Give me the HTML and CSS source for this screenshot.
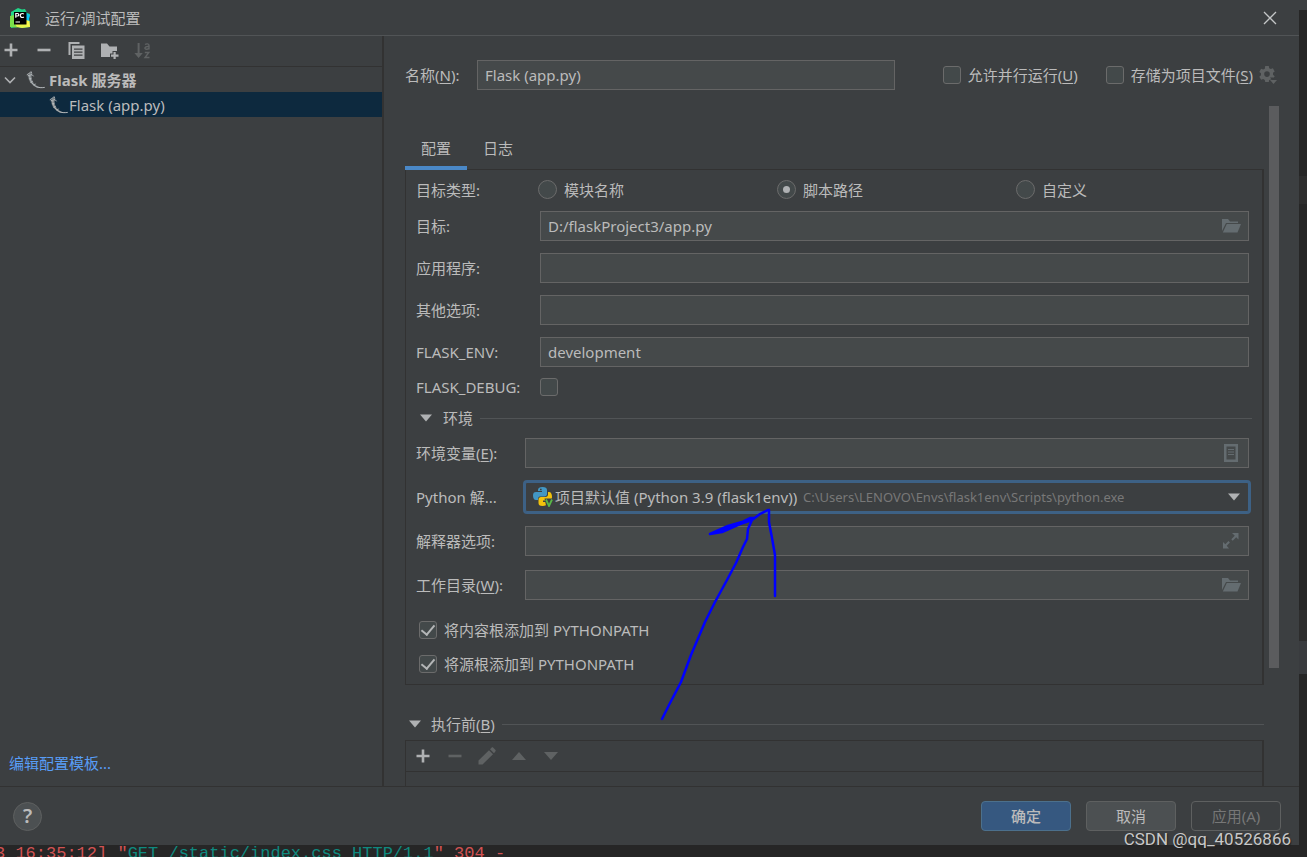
FILE: index.html
```html
<!DOCTYPE html>
<html lang="zh-CN">
<head>
<meta charset="utf-8">
<title>运行/调试配置</title>
<link rel="stylesheet" href="styles.css">
</head>
<body>
<svg class="defs" width="0" height="0" aria-hidden="true">
  <symbol id="plus" viewBox="0 0 16 16"><path d="M6.700 1.500h2.600v5.200h5.200v2.600H9.300v5.200H6.700V9.300H1.500V6.700h5.200z"/></symbol>
  <symbol id="minus" viewBox="0 0 16 16"><path d="M1.500 6.700h13v2.600h-13z"/></symbol>
  <symbol id="folder-open" viewBox="0 0 20 16"><path d="M1 1h6l2 2.500h8V5H5L1 13z"/><path d="M5.800 6H20l-3.500 8.500H1.800z"/></symbol>
  <symbol id="tri-down" viewBox="0 0 12 8"><path d="M0 .5h12L6 7.500z"/></symbol>
  <symbol id="flask" viewBox="0 0 20 18">
    <path d="M1.500 4.500L4.500 1.500l1.700 1L5.500 6c.3 4.500 3.500 8.500 8 10l5 .3c-3 1.200-8 .9-11-1.600C4 12 2.300 8.500 2.300 5.800z" fill="#777d80"/>
    <path d="M.8 3.800L4 1.800l1-1.200.8 1.700M1.800 4.800l4.200-1.200M6 3.500l1.500 1.800M3.800 5c0 4 2 8 6 10.300M3 8l2.500-.8M4.500 11.500l2.200-1.200M8 14.500l1.500-1.800M10 15.600c3 1.300 5.500 1.200 8.800.8" fill="none" stroke="#b9bdbf" stroke-width=".9"/>
  </symbol>
</svg>

<div class="dialog">
  <header class="titlebar">
    <svg class="logo" viewBox="0 0 20 20" aria-hidden="true">
      <path d="M1 4l7-4 4 1.500L15 1l2 4 3 1-1 4 1 9-9 1-4-1-6 1z" fill="#21d789"/>
      <path d="M0 8l4-1 4 12-1 .5L0 19z" fill="#7be04a"/>
      <path d="M5 16h14l1 3-8 1-5-1z" fill="#e6f24a"/>
      <path d="M16 5l4 2-1 4 .5 6H16z" fill="#07c3f2"/>
      <path d="M16 12l3.500 1 .5 6-4-2z" fill="#fcf84a"/>
      <rect x="4" y="4" width="12.500" height="12.500" fill="#000"/>
      <path d="M5.800 9.700V5.500h1.700a1.200 1.200 0 010 2.500H5.800M13.800 6.200a2 2 0 100 2.600M5.500 14h4.500" fill="none" stroke="#fff" stroke-width="1.200"/>
    </svg>
    <h1>运行/调试配置</h1>
    <button class="icon-btn close" aria-label="关闭"><svg viewBox="0 0 14 14" width="14" height="14"><path d="M1 1l12 12M13 1L1 13" fill="none" stroke="#c4c6c7" stroke-width="1.300"/></svg></button>
  </header>

  <div class="body">
    <aside class="side">
      <div class="toolbar">
        <button class="icon-btn" aria-label="添加"><svg width="16" height="16"><use href="#plus"/></svg></button>
        <button class="icon-btn" aria-label="移除"><svg width="16" height="16"><use href="#minus"/></svg></button>
        <button class="icon-btn" aria-label="复制"><svg width="17" height="17" viewBox="0 0 17 17"><path d="M.5 0h11v2H2.500v11h-2z"/><path fill-rule="evenodd" d="M4 3.500h12.500V17H4zM6 6.500v1.200h8.500V6.500zM6 9.500v1.200h8.500V9.500zM6 12.500v1.200h8.500v-1.200z"/></svg></button>
        <button class="icon-btn" aria-label="新建文件夹"><svg width="19" height="17" viewBox="0 0 19 17"><path d="M1 1.500h6l2.500 3H17V9h-4.500v2.500H10V15H1z"/><path d="M13.500 10h2.200v2.500h2.800v2.200h-2.800V17h-2.200v-2.300H11v-2.200h2.500z"/></svg></button>
        <button class="icon-btn dim" disabled aria-label="排序"><svg width="17" height="17" viewBox="0 0 17 17"><path d="M3.600 1h2v10h3.200l-4.200 5-4.200-5h3.200z"/><path d="M11 2.500c1.500-1 4-.9 4 1V7.500M15 4.500c-5-.5-5 3-2.300 2.700 1.300 0 2.300-.7 2.300-1.500M10.800 10.500h4L11 15.500h4.500" fill="none" stroke="#5f6263" stroke-width="1.400"/></svg></button>
      </div>
      <ul class="tree">
        <li class="group"><svg class="chev" viewBox="0 0 12 12" width="12" height="12"><path d="M1 3.500l5 5 5-5" fill="none" stroke="#afb1b3" stroke-width="1.600"/></svg><svg width="20" height="18"><use href="#flask"/></svg><span>Flask 服务器</span></li>
        <li class="leaf"><svg width="20" height="18"><use href="#flask"/></svg><span>Flask (app.py)</span></li>
      </ul>
      <a class="template-link" href="#">编辑配置模板...</a>
    </aside>

    <main class="main">
      <div class="name-row">
        <label class="name-label" for="name">名称(<u>N</u>):</label>
        <input class="field name-field" id="name" type="text" value="Flask (app.py)">
        <div class="name-options">
          <label class="check"><input type="checkbox"><span>允许并行运行(<u>U</u>)</span></label>
          <label class="check"><input type="checkbox"><span>存储为项目文件(<u>S</u>)</span></label>
          <button class="icon-btn gear dim" disabled aria-label="存储选项"><svg width="18" height="18" viewBox="0 0 18 18"><path fill-rule="evenodd" d="M6.200 0h3.600l.4 2.200 1.600.9 2.100-.8 1.800 3.100-1.700 1.400v2l1.700 1.400-.8 1.300H11l1.500 2-.7-.1-1.600.6L9.800 16H6.200l-.4-2-1.600-1-2.100.8L.3 10.700 2 9.300v-2L.3 5.900l1.800-3.100 2.100.8 1.600-.9zM8 5.300a2.800 2.800 0 100 5.600 2.800 2.800 0 000-5.600z"/><path d="M11 14h7l-3.500 4z"/></svg></button>
        </div>
      </div>

      <div class="scroll">
        <div class="content">
          <div class="tabs" role="tablist">
            <button class="tab active" role="tab" aria-selected="true">配置</button>
            <button class="tab" role="tab" aria-selected="false">日志</button>
          </div>
          <section class="panel">
            <div class="row type-row">
              <span>目标类型:</span>
              <div class="radios">
                <label class="check"><input type="radio" name="type"><span>模块名称</span></label>
                <label class="check"><input type="radio" name="type" checked><span>脚本路径</span></label>
                <label class="check"><input type="radio" name="type"><span>自定义</span></label>
              </div>
            </div>
            <div class="rows">
              <div class="row"><label for="target">目标:</label><div class="field"><input id="target" type="text" value="D:/flaskProject3/app.py"><button class="icon-btn steel" aria-label="浏览"><svg width="20" height="16"><use href="#folder-open"/></svg></button></div></div>
              <div class="row"><label for="app">应用程序:</label><input class="field" id="app" type="text"></div>
              <div class="row"><label for="opts">其他选项:</label><input class="field" id="opts" type="text"></div>
              <div class="row"><label for="fenv">FLASK_ENV:</label><input class="field" id="fenv" type="text" value="development"></div>
            </div>
            <div class="row debug-row"><label for="debug">FLASK_DEBUG:</label><div class="check"><input id="debug" type="checkbox"></div></div>
            <h2 class="section env-section"><svg width="12" height="8"><use href="#tri-down"/></svg><span>环境</span></h2>
            <div class="rows env-rows">
              <div class="row"><label for="vars">环境变量(<u>E</u>):</label><div class="field"><input id="vars" type="text"><button class="icon-btn steel" aria-label="编辑变量"><svg width="20" height="18" viewBox="0 0 20 18"><path fill-rule="evenodd" d="M3 0h14v18H3zM5.500 2.500v13h9v-13z"/><path d="M7 5h6v1H7zM7 7.500h6v1H7zM7 10h6v1H7z"/></svg></button></div></div>
              <div class="row"><label for="interp">Python 解...</label><div class="field combo">
                <svg width="20" height="20" viewBox="0 0 20 20" aria-hidden="true"><path d="M5 5V3c0-2 1.500-3 4.500-3S14 1 14 3v4c0 1.500-1 2.500-2.500 2.500H7C5.500 9.500 5 11 5 13H3c-2 0-3-2-3-4.500S1 5 3 5h6V4H5z" fill="#4297c4"/><path d="M15 5h1c2 0 3 2 3 5 0 2-1 3.500-3 3.500h-6V15h4v1.500c0 1.500-1.500 2.500-4.500 2.500S5.500 18 5.500 16v-3.500c0-1.500 1-2.500 2.500-2.500h4.500C14 10 15 9 15 7.500z" fill="#f2c20c"/><path d="M7 1.700h1.600v1.500H7z" fill="#3c3f41"/><path d="M11.500 11.500h9v9h-7z" fill="#3c3f41"/><path d="M13 12.500l3 6.500 3-6.500" fill="none" stroke="#59b848" stroke-width="1.800"/></svg>
                <select id="interp"><option>项目默认值 (Python 3.9 (flask1env))</option></select>
                <span class="path">C:\Users\LENOVO\Envs\flask1env\Scripts\python.exe</span>
                <svg class="caret" width="12" height="8"><use href="#tri-down"/></svg>
              </div></div>
              <div class="row"><label for="iopts">解释器选项:</label><div class="field"><input id="iopts" type="text"><button class="icon-btn steel" aria-label="展开"><svg width="20" height="16" viewBox="0 0 20 16"><path d="M11 0h6.500v6.500l-2.300-2.300-3.500 3.500-1.400-1.400 3.500-3.500zM2 9l2.300 2.300L7.500 8l1.400 1.400-3.200 3.300L8 15.500H2z"/></svg></button></div></div>
              <div class="row"><label for="wd">工作目录(<u>W</u>):</label><div class="field"><input id="wd" type="text"><button class="icon-btn steel" aria-label="浏览目录"><svg width="20" height="16"><use href="#folder-open"/></svg></button></div></div>
            </div>
            <div class="path-checks">
              <label class="check"><input type="checkbox" checked><span>将内容根添加到 PYTHONPATH</span></label>
              <label class="check"><input type="checkbox" checked><span>将源根添加到 PYTHONPATH</span></label>
            </div>
          </section>
          <h2 class="section before-section"><svg width="12" height="8"><use href="#tri-down"/></svg><span>执行前(<u>B</u>)</span></h2>
          <section class="tasks">
            <div class="toolbar">
              <button class="icon-btn" aria-label="添加任务"><svg width="16" height="16"><use href="#plus"/></svg></button>
              <button class="icon-btn dim" disabled aria-label="移除任务"><svg width="16" height="16"><use href="#minus"/></svg></button>
              <button class="icon-btn dim" disabled aria-label="编辑任务"><svg width="18" height="18" viewBox="0 0 18 18"><path d="M.5 17.500v-4L11 3.200l4 4L4.500 17.500zM12 2.200L13.500.7c.6-.6 1.200-.6 1.800 0l2 2c.6.6.6 1.200 0 1.800L16 6.200z"/></svg></button>
              <button class="icon-btn dim" disabled aria-label="上移"><svg width="14" height="8" viewBox="0 0 14 8"><path d="M7 0l7 8H0z"/></svg></button>
              <button class="icon-btn dim" disabled aria-label="下移"><svg width="14" height="8" viewBox="0 0 14 8"><path d="M7 8L0 0h14z"/></svg></button>
            </div>
          </section>
        </div>
        <div class="thumb"></div>
      </div>
    </main>
  </div>

  <footer class="footer">
    <button class="help" aria-label="帮助">?</button>
    <button class="btn primary">确定</button>
    <button class="btn">取消</button>
    <button class="btn" disabled>应用(A)</button>
  </footer>
</div>

<div class="editor-edge"><i class="mark top"></i><i class="mark mid"></i><i class="mark line"></i><i class="mark low"></i></div>
<div class="console"><span>3 16:35:12] "</span><span class="req">GET /static/index.css HTTP/1.1</span><span>" 304 -</span></div>

<svg class="scribble" width="160" height="230" viewBox="640 500 160 230" aria-hidden="true">
  <path d="M662 719l7-14 12-23 10-27 14-33 10-20 12-22 9-17 7-16 4-8 1-10 4-9-12 4-18 8-12 2 18-8 14-4 8-4h4l-12 5-20 7-12 4M752 520l8-6 8-4h1v12l3 16 3 17v41"/>
</svg>
<div class="watermark">CSDN @qq_40526866</div>
</body>
</html>
```
FILE: styles.css
```css
* { box-sizing: border-box; }

body {
  margin: 0;
  height: 100vh;
  display: grid;
  grid-template-columns: 1fr 8px;
  grid-template-rows: 1fr 12px;
  overflow: hidden;
  background: #262626;
  color: #bbbbbb;
  font: 15px/20px "Noto Sans", "Noto Sans CJK SC", sans-serif;
}

button, input, select { font: inherit; color: inherit; margin: 0; padding: 0; }
svg { fill: #afb1b3; display: block; flex: none; }
.defs { position: absolute; }
h1, h2 { margin: 0; font: inherit; }
u { text-underline-offset: 2px; }

.dialog { display: flex; flex-direction: column; min-width: 0; min-height: 0; background: #3c3f41; }

.titlebar {
  display: flex;
  align-items: center;
  gap: 15px;
  height: 36px;
  padding: 0 22px 0 10px;
  border-bottom: 1px solid #515456;
}
.logo { width: 20px; height: 20px; }
.close { margin-left: auto; }

.icon-btn { display: flex; align-items: center; justify-content: center; border: 0; background: none; }
.dim svg { fill: #5f6263; }
.steel svg { fill: #646c70; }

.body { display: flex; flex: 1; min-height: 0; }

.side { display: flex; flex-direction: column; width: 384px; border-right: 2px solid #323232; }
.toolbar { display: flex; align-items: center; }
.toolbar .icon-btn { width: 33px; height: 28px; }
.side .toolbar { height: 31px; padding-bottom: 2px; margin-left: -6px; border-bottom: 1px solid #323232; }
.tree { list-style: none; margin: 0; padding: 0; flex: 1; }
.tree li { display: flex; align-items: center; height: 25px; }
.group { padding-left: 4px; font-weight: 700; }
.chev { margin-right: 10px; }
.group span { margin-left: 3px; }
.tree .leaf { padding-left: 49px; background: #0d293e; }
.template-link { padding: 0 9px 13px; color: #589df6; text-decoration: none; }

.main { display: flex; flex-direction: column; flex: 1; min-width: 0; padding-left: 21px; overflow: hidden; }
.name-row { display: flex; align-items: center; flex: none; height: 70px; padding: 8px 22px 0 0; }
.name-label { width: 72px; }
.name-field { flex: 0 1 418px; }
.name-options { display: flex; align-items: center; margin-left: auto; }
.name-options .check + .check { margin-left: 28px; }
.gear { margin-left: 6px; }

.field {
  display: flex;
  align-items: center;
  min-width: 0;
  width: 100%;
  height: 30px;
  padding: 0 7px;
  border: 1px solid #646464;
  background: #45494a;
  outline: 0;
}
.field > input { flex: 1; min-width: 0; border: 0; background: none; outline: 0; }

.check { display: flex; align-items: center; gap: 7px; }
.check input {
  appearance: none;
  display: grid;
  place-items: center;
  flex: none;
  width: 18px;
  height: 18px;
  border: 1px solid #6b6b6b;
  border-radius: 3px;
  background: #43494a;
}
.check input[type="radio"] { width: 19px; height: 19px; border-radius: 50%; }
.check input[type="radio"]:checked::after { content: ""; width: 7px; height: 7px; border-radius: 50%; background: #afb1b3; }
.check input[type="checkbox"]:checked::after {
  content: "";
  width: 6px;
  height: 11px;
  margin-bottom: 3px;
  border: solid #b4b6b7;
  border-width: 0 2px 2px 0;
  transform: rotate(40deg);
}

.scroll { display: flex; align-items: flex-start; gap: 5px; flex: 1; min-height: 0; padding-right: 20px; }
.content { flex: 1; min-width: 0; }
.thumb { width: 10px; height: 562px; background: #5b5c5e; }

.tabs { position: relative; display: flex; height: 64px; padding-top: 20px; }
.tab { padding: 3px 16px 0; border: 0; border-bottom: 4px solid transparent; background: none; }
.tab.active { border-color: #4a88c7; }

.panel { margin-top: -1px; padding: 0 13px 3px 10px; border: 1px solid #323232; border-right-width: 2px; }

.row { display: grid; grid-template-columns: 124px 1fr; align-items: center; }
.type-row { height: 41px; padding-bottom: 2px; }
.radios { display: grid; grid-template-columns: 239px 239px 1fr; margin-left: -2px; }
.rows { display: grid; gap: 12px; }
.debug-row { height: 40px; }

.section { display: flex; align-items: center; height: 22px; }
.section::after { content: ""; flex: 1; height: 1px; margin-left: 7px; background: #515456; }
.section span { margin-left: 11px; }
.env-section { margin-right: -3px; padding-left: 4px; }

.env-rows { gap: 14px; margin-top: 9px; }
.env-rows .row { grid-template-columns: 109px 1fr; }
.combo { border-color: #3d6185; box-shadow: 0 0 0 2px #3d6185; border-radius: 2px; background: #3c3f41; padding-right: 8px; }
.combo select { appearance: none; border: 0; background: none; outline: 0; margin-left: 2px; }
.path { margin-left: 5px; color: #787878; font-size: 13px; white-space: nowrap; }
.caret { margin-left: auto; }

.path-checks { margin: 13px 0 0 3px; }
.path-checks .check { height: 34px; }

.before-section { margin: 28px 0 5px; padding-left: 4px; }
.before-section span { margin-left: 10px; }
.tasks { height: 60px; border: 1px solid #323232; border-right-width: 2px; }
.tasks .toolbar { height: 31px; padding-left: 1px; border-bottom: 1px solid #323232; }
.tasks .toolbar .icon-btn { width: 32px; }

.footer {
  display: flex;
  align-items: center;
  gap: 15px;
  flex: none;
  height: 59px;
  padding: 0 18px 0 13px;
  border-top: 1px solid #323232;
}
.help {
  width: 29px;
  height: 29px;
  margin-right: auto;
  border: 1px solid #5e6060;
  border-radius: 50%;
  background: #4c5052;
  font-size: 20px;
  font-weight: 600;
}
.btn { width: 90px; height: 30px; border: 1px solid #5e6060; border-radius: 4px; background: #4c5052; }
.btn.primary { border-color: #4c708c; background: #365880; font-weight: 500; }
.btn:disabled { background: none; color: #777777; }

.editor-edge { grid-row: 1 / 3; grid-column: 2; display: flex; flex-direction: column; }
.mark { background: #2d2d2d; }
.top { height: 10px; background: #3c3f41; }
.mid { height: 28px; margin-top: 166px; }
.line { height: 31px; margin-top: 406px; }
.low { height: 33px; background: #393b3e; }

.console {
  grid-row: 2;
  grid-column: 1;
  margin-left: -5px;
  white-space: pre;
  color: #d25252;
  font: 17px/17px "Liberation Mono", monospace;
}
.req { color: #0f8a80; }

.scribble { position: absolute; left: 640px; top: 500px; pointer-events: none; }
.scribble path { fill: none; stroke: #0000ff; stroke-width: 2.5; stroke-linecap: round; stroke-linejoin: round; }

.watermark {
  position: absolute;
  right: 16px;
  bottom: 8px;
  color: #c8c8c8;
  font: 17px/20px Roboto, sans-serif;
  text-shadow: 1px 1px 1px #222222;
}
```
